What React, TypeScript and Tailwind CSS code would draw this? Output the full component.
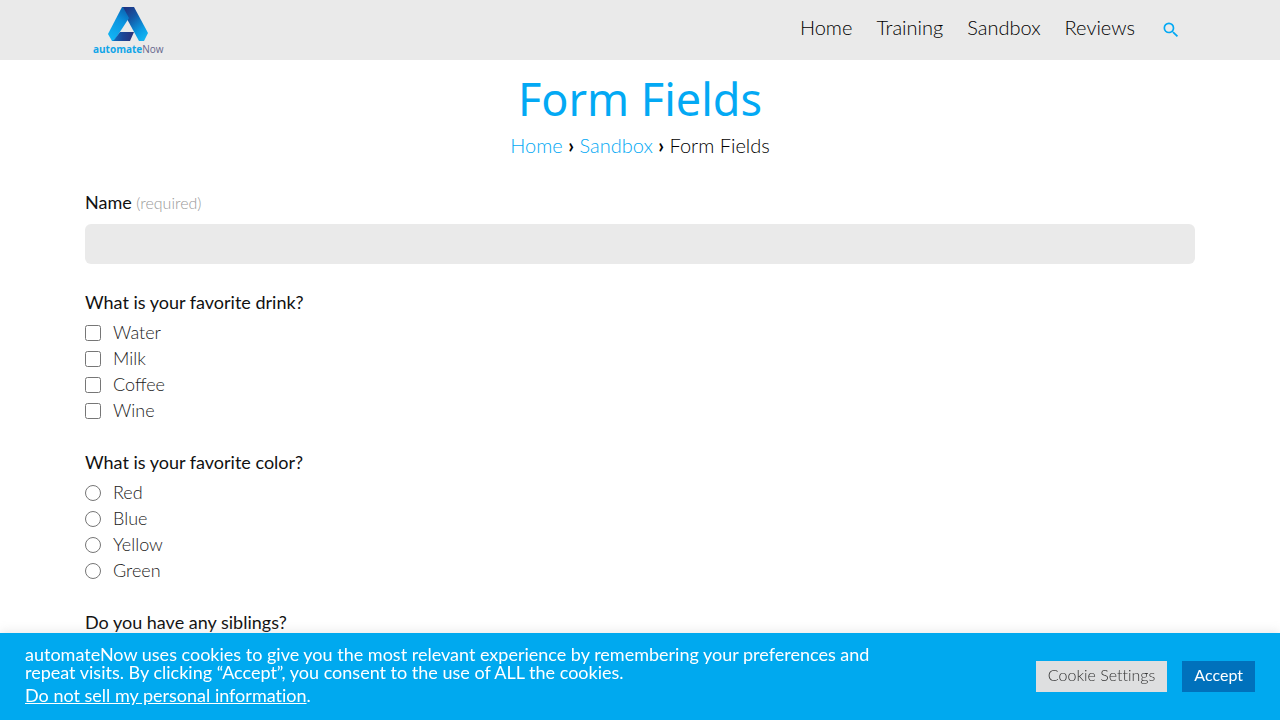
import type { ReactNode } from 'react';

const navLinks = ['Home', 'Training', 'Sandbox', 'Reviews'];
const drinks = ['Water', 'Milk', 'Coffee', 'Wine'];
const colors = ['Red', 'Blue', 'Yellow', 'Green'];

function Logo() {
  return (
    <a href="#home" className="flex flex-col items-center pt-1">
      <svg viewBox="0 0 40 34" className="h-[34px] w-10" aria-hidden="true">
        <defs>
          <linearGradient id="left" x1="0.6" y1="0" x2="0.2" y2="1">
            <stop offset="0" stopColor="#0a67b5" />
            <stop offset="0.35" stopColor="#0b93df" />
            <stop offset="1" stopColor="#12b7f5" />
          </linearGradient>
          <linearGradient id="right" x1="0.1" y1="0" x2="0.8" y2="1">
            <stop offset="0" stopColor="#20307f" />
            <stop offset="0.35" stopColor="#1557a5" />
            <stop offset="0.75" stopColor="#0b9ce4" />
            <stop offset="1" stopColor="#14b5f2" />
          </linearGradient>
          <linearGradient id="bar" x1="0" y1="0" x2="1" y2="0">
            <stop offset="0" stopColor="#0c74c4" />
            <stop offset="0.5" stopColor="#1c4596" />
            <stop offset="1" stopColor="#2b2f78" />
          </linearGradient>
        </defs>
        <path d="M14 0H26L40 26L36 34H31L19 12Z" fill="url(#right)" />
        <path d="M14 0L0 27L4 34H6L21 11L15 0Z" fill="url(#left)" />
        <path d="M12 25H26L22 34H4L6 33Z" fill="url(#bar)" />
      </svg>
      <span className="font-['Open_Sans',sans-serif] text-[10px] leading-4 text-[#66668c]">
        <b className="font-bold text-[#10a5e8]">automate</b>Now
      </span>
    </a>
  );
}

function Group({ title, children }: { title: string; children?: ReactNode }) {
  return (
    <fieldset className="mb-[26px]">
      <legend className="mb-1.5 text-[18px] leading-6 text-[#111]">{title}</legend>
      {children}
    </fieldset>
  );
}

function Options({ type, name, items }: { type: 'checkbox' | 'radio'; name: string; items: string[] }) {
  return (
    <div>
      {items.map((item) => (
        <label key={item} className="flex h-[26px] items-start gap-3 text-[18px] leading-6 font-light text-[#222]">
          <input type={type} name={name} value={item} className="mt-[5px] size-4" />
          {item}
        </label>
      ))}
    </div>
  );
}

export default function App() {
  return (
    <div className="h-screen overflow-hidden bg-white font-[Lato,sans-serif] text-black">
      <header className="bg-[#eaeaea]">
        <div className="mx-auto flex h-[60px] max-w-[1110px] items-center justify-between pr-[14px] pl-2">
          <Logo />
          <div className="flex items-center gap-[26px]">
            <nav className="flex gap-6 pb-1.5 text-xl leading-7 font-light">
              {navLinks.map((link) => (
                <a key={link} href={`#${link.toLowerCase()}`}>{link}</a>
              ))}
            </nav>
            <button type="button" aria-label="Search" className="text-[#03a9f4]">
              <svg viewBox="0 0 24 24" className="size-5" fill="currentColor" aria-hidden="true">
                <path d="M15.5 14h-.79l-.28-.27A6.47 6.47 0 0 0 16 9.5 6.5 6.5 0 1 0 9.5 16c1.61 0 3.09-.59 4.23-1.57l.27.28v.79l5 4.99L20.49 19l-4.99-5zm-6 0C7.01 14 5 11.99 5 9.500S7.010 5 9.500 5 14 7.010 14 9.500 11.990 14 9.500 14z" />
              </svg>
            </button>
          </div>
        </div>
      </header>

      <main className="mx-auto max-w-[1140px] px-[15px]">
        <h1 className="pt-2 text-center font-['Noto_Sans',sans-serif] text-[45px] leading-[62px] text-[#03a9f4]">Form Fields</h1>
        <p className="mb-[30px] pt-px text-center text-xl leading-[29px] font-light">
          <a href="#home" className="text-[#03a9f4]">Home</a> <span className="font-bold">›</span>{' '}
          <a href="#sandbox" className="text-[#03a9f4]">Sandbox</a> <span className="font-bold">›</span> Form Fields
        </p>
        <form>
          <div className="mb-[26px]">
            <label htmlFor="name" className="mb-2.5 block text-[18px] leading-6 text-[#111]">
              Name <span className="text-base leading-4 font-light text-[#999]">(required)</span>
            </label>
            <input id="name" type="text" className="block h-10 w-full rounded-md bg-[#eaeaea] px-3" />
          </div>
          <Group title="What is your favorite drink?">
            <Options type="checkbox" name="drink" items={drinks} />
          </Group>
          <Group title="What is your favorite color?">
            <Options type="radio" name="color" items={colors} />
          </Group>
          <Group title="Do you have any siblings?" />
        </form>
      </main>

      <aside className="fixed inset-x-0 bottom-0 flex items-center justify-between bg-[#00a9ef] px-[25px] pt-3 pb-4 text-white shadow-[0_-1px_10px_0_rgba(172,171,171,0.3)] [font-variant-ligatures:none]">
        <div className="max-w-[860px] text-[18px] leading-[18px]">
          <p>
            automateNow uses cookies to give you the most relevant experience by remembering your preferences and repeat visits. By clicking “Accept”, you consent to the use of ALL the cookies.
          </p>
          <p className="mt-[5px]">
            <a href="#privacy" className="underline">Do not sell my personal information</a>.
          </p>
        </div>
        <div className="flex gap-[15px] pt-1 text-base leading-4">
          <button type="button" className="h-[31px] bg-[#dedfe0] px-3 pb-[3px] font-light text-[#333]">Cookie Settings</button>
          <button type="button" className="h-[31px] bg-[#0071bc] px-3 pb-[3px] text-white">Accept</button>
        </div>
      </aside>
    </div>
  );
}
